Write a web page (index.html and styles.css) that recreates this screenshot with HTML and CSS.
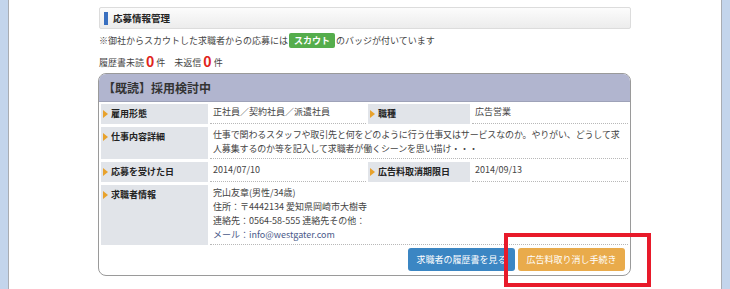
FILE: index.html
```html
<!DOCTYPE html>
<html lang="ja">
<head>
	<meta charset="UTF-8"/>
	<title>応募情報管理</title>
	<link rel="stylesheet" href="styles.css">
</head>
<body>

<div class="page">
	<div class="side side-left"></div>

	<div class="main">
		<div class="content">
			<h2 class="section-title"><span class="mark"></span>応募情報管理</h2>

			<p class="note">※御社からスカウトした求職者からの応募には<span class="badge">スカウト</span>のバッジが付いています</p>

			<p class="counts">履歴書未読 <b>0</b> 件　未返信 <b>0</b> 件</p>

			<div class="entry">
				<div class="entry-head">【既読】採用検討中</div>

				<table class="info">
					<colgroup>
						<col class="col-label">
						<col class="col-value">
						<col class="col-label2">
						<col>
					</colgroup>
					<tr>
						<th>雇用形態</th>
						<td>正社員／契約社員／派遣社員</td>
						<th>職種</th>
						<td>広告営業</td>
					</tr>
					<tr>
						<th>仕事内容詳細</th>
						<td colspan="3" class="long-text">仕事で関わるスタッフや取引先と何をどのように行う仕事又はサービスなのか。やりがい、どうして求人募集するのか等を記入して求職者が働くシーンを思い描け・・・</td>
					</tr>
					<tr>
						<th>応募を受けた日</th>
						<td>2014/07/10</td>
						<th>広告料取消期限日</th>
						<td>2014/09/13</td>
					</tr>
					<tr class="tall">
						<th>求職者情報</th>
						<td colspan="3">
							完山友章(男性/34歳)<br>
							住所：〒4442134 愛知県岡崎市大樹寺<br>
							連絡先：0564-58-555 連絡先その他：<br>
							<span class="mail">メール：info@westgater.com</span>
						</td>
					</tr>
				</table>

				<div class="actions">
					<button class="btn btn-blue">求職者の履歴書を見る</button>
					<button class="btn btn-orange">広告料取り消し手続き</button>
				</div>
			</div>
		</div>

		<!-- highlight frame drawn over the cancel button -->
		<div class="highlight"></div>
	</div>

	<div class="side side-right"></div>
</div>

</body>
</html>
```

FILE: styles.css
```css
body {
    margin: 0;
    font-family: "Noto Sans CJK JP", "Noto Sans", sans-serif;
    font-size: 9px;
    color: #333;
    background: #fff;
}

.page {
    display: flex;
    height: 289px;
    overflow: hidden;
}

.side {
    width: 8px;
    background-color: #c3d5ec;
}

.side-left {
    border-right: 1px solid #a9adb3;
}

.side-right {
    border-left: 1px solid #a9adb3;
}

.main {
    flex: 1;
    position: relative;
}

.content {
    width: 533px;
    margin-left: 89px;
    padding-top: 7px;
}

.section-title {
    display: flex;
    align-items: center;
    height: 20px;
    margin: 0 0 0 1px;
    padding-left: 4px;
    font-size: 9.5px;
    font-weight: bold;
    color: #222;
    border: 1px solid #dcdcdc;
    border-radius: 2px;
    background: linear-gradient(#fcfcfc, #ececec);
}

.mark {
    width: 4px;
    height: 13px;
    margin-right: 5px;
    background-color: #3a70c0;
}

.note {
    margin: 4px 0 0 1px;
    height: 16px;
    line-height: 16px;
    color: #444;
}

.badge {
    display: inline-block;
    margin: 0 1px;
    padding: 0 5px;
    line-height: 15px;
    font-weight: bold;
    color: #fff;
    background-color: #55ad4c;
    border-radius: 2px;
}

.counts {
    margin: 4px 0 0 1px;
    height: 16px;
    line-height: 16px;
    color: #444;
}

.counts b {
    font-size: 14px;
    color: #e0241c;
    vertical-align: -1px;
}

.entry {
    margin-top: 4px;
    border: 1px solid #9a9a9a;
    border-radius: 8px;
    overflow: hidden;
    height: 201px;
}

.entry-head {
    height: 27px;
    line-height: 27px;
    padding-left: 4px;
    font-size: 12px;
    font-weight: bold;
    color: #333;
    background-color: #b1b5cf;
    border-bottom: 1px solid #9ea2b8;
}

.info {
    width: 100%;
    table-layout: fixed;
    border-collapse: separate;
    border-spacing: 2px 3px;
    margin-top: -1px;
}

.col-label {
    width: 107px;
}

.col-value {
    width: 156px;
}

.col-label2 {
    width: 102px;
}

.info th {
    padding: 3px 0 0 10px;
    text-align: left;
    vertical-align: top;
    font-weight: bold;
    color: #222;
    line-height: 14px;
    background-color: #e1e4e9;
    position: relative;
}

.info th::before {
    content: "";
    position: absolute;
    left: 2px;
    top: 6px;
    border-left: 5px solid #e8a22c;
    border-top: 4px solid transparent;
    border-bottom: 4px solid transparent;
}

.info td {
    padding: 1px 2px 2px 3px;
    vertical-align: top;
    line-height: 14px;
    color: #444;
    border-bottom: 1px dotted #b8b8b8;
}

.info td.long-text {
    padding-right: 0;
    letter-spacing: -0.15px;
}

.info tr {
    height: 20px;
}

.info tr.tall {
    height: 59px;
}

.mail {
    color: #4a5a8a;
}

.actions {
    display: flex;
    justify-content: flex-end;
    gap: 3px;
    padding: 0 5px 0 0;
}

.btn {
    width: 107px;
    height: 23px;
    padding: 0;
    font-family: inherit;
    font-size: 9px;
    color: #fff;
    border: none;
    border-radius: 3px;
}

.btn-blue {
    background-color: #3b86c3;
}

.btn-orange {
    background-color: #e9ab4b;
}

.highlight {
    position: absolute;
    left: 495px;
    top: 233px;
    width: 139px;
    height: 46px;
    border: 4px solid #e81a2a;
}
```
